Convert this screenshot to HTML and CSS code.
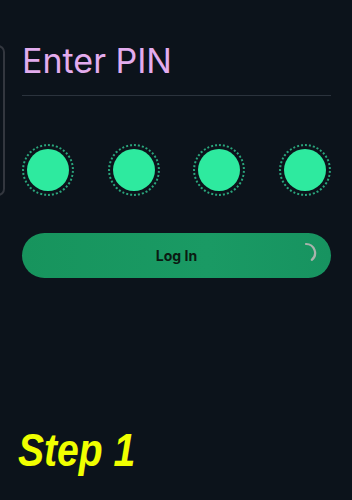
FILE: index.html
```html
<html>
    <head>
        <meta charset="utf-8" />
        <title>Enter PIN</title>
        <link rel="stylesheet" href="styles.css">
    </head>
    <body>
        <div class="edge"></div>
        <div class="screen">
            <h1 class="title">Enter PIN</h1>
            <div class="divider"></div>

            <div class="pins">
                <div class="pin"><span class="dot"></span></div>
                <div class="pin"><span class="dot"></span></div>
                <div class="pin"><span class="dot"></span></div>
                <div class="pin"><span class="dot"></span></div>
            </div>

            <button class="login">
                Log In
                <svg class="spinner" width="22" height="22" viewBox="0 0 22 22">
                    <path d="M11 2 A9 9 0 0 1 16.8 17.9" fill="none" stroke="#a9b3ad" stroke-width="2.2" stroke-linecap="round" />
                </svg>
            </button>
        </div>

        <div class="step">Step 1</div>
    </body>
</html>
```

FILE: styles.css
```css
html {
    background: #0c131b;
}

body, html {
    margin: 0;
    padding: 0;
    font-family: Inter, "Noto Sans", sans-serif;
}

body {
    position: relative;
    width: 352px;
    height: 500px;
    overflow: hidden;
}

.edge {
    position: absolute;
    left: -20px;
    top: 45px;
    width: 21px;
    height: 147px;
    border: 2px solid #33373f;
    border-radius: 7px;
}

.screen {
    padding: 0 21px 0 22px;
}

.title {
    margin: 0;
    padding-top: 41px;
    font-size: 34px;
    line-height: 40px;
    font-weight: 400;
    color: #e3acee;
}

.divider {
    margin-top: 14px;
    height: 1px;
    background: #2b333d;
}

.pins {
    display: flex;
    justify-content: space-between;
    margin-top: 48px;
}

.pin {
    width: 48px;
    height: 48px;
    border: 2px dotted #2aa57c;
    border-radius: 50%;
    display: flex;
    align-items: center;
    justify-content: center;
}

.dot {
    width: 42px;
    height: 42px;
    border-radius: 50%;
    background: #2eea9f;
}

.login {
    position: relative;
    display: block;
    width: 100%;
    height: 45px;
    margin-top: 37px;
    border: none;
    border-radius: 23px;
    background: linear-gradient(90deg, #17945d, #1a9a64 60%, #179360);
    color: #0b1a12;
    font-family: Inter, "Noto Sans", sans-serif;
    font-size: 14px;
    font-weight: 700;
}

.spinner {
    position: absolute;
    right: 14px;
    top: 9px;
}

.step {
    margin: 149px 0 0 18px;
    font-family: "Liberation Sans", Arial, sans-serif;
    font-size: 46px;
    font-weight: 700;
    font-style: italic;
    line-height: 46px;
    color: #f0ff00;
    transform: scaleX(0.85);
    transform-origin: left;
}
```
